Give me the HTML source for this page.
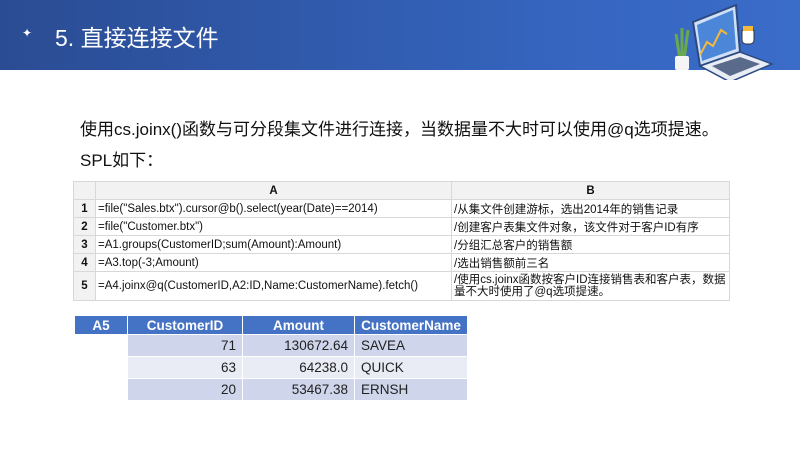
<!DOCTYPE html>
<html><head><meta charset="utf-8"><style>
body{margin:0;width:800px;height:450px;background:#fff;position:relative;overflow:hidden;font-family:"Liberation Sans","Noto Sans CJK SC",sans-serif}
.hd{position:absolute;left:0;top:0;width:800px;height:70px;background:linear-gradient(90deg,#2a4c93 0%,#3565bf 70%,#3a6cc9 100%)}
.ttl{position:absolute;left:55px;top:19px;color:#fff;font-size:23px;}
.star{position:absolute;left:22px;top:26px;color:#fff;font-size:12px}
.p{position:absolute;left:80px;font-size:17px;color:#111}
table{border-collapse:collapse;position:absolute}
.t1{left:73px;top:181px;font-size:11.5px;color:#111}
.t1 td{border:1px solid #d8d8d8;height:17px;padding:0 2px;white-space:nowrap}
.t1 .n{background:#f2f2f2;font-weight:bold;text-align:center;width:17px}
.t1 .h td{background:#f2f2f2;font-weight:bold;text-align:center}
.t2{left:74px;top:315px;font-size:13.5px;color:#222}
.t2 td{border:1px solid #fff;padding:0 6px;height:21px}
.t2 .h td{background:#4472c4;color:#fff;font-weight:bold;text-align:center;height:18px}
.r1 td.d,.r3 td.d{background:#cfd5ea}.r2 td.d{background:#e9ebf5}
</style></head><body>
<div class="hd"></div>
<div class="star">✦</div>
<div class="ttl">5. 直接连接文件</div>
<svg style="position:absolute;left:660px;top:0" width="140" height="80" viewBox="660 0 140 80">
<polygon points="693,22 736,5 740,52 700,66" fill="#cfe0f6" stroke="#2c4a80" stroke-width="2"/>
<polygon points="697,25 733,10 736,49 702,61" fill="#4b86d8"/>
<polyline points="700,55 707,42 713,46 721,30 727,34" fill="none" stroke="#f4b83a" stroke-width="2"/>
<polygon points="700,66 740,52 772,64 730,82" fill="#e8edf5" stroke="#2c4a80" stroke-width="1.5"/>
<polygon points="712,66 740,57 760,64 730,76" fill="#5a6a8a"/>
<rect x="742" y="28" width="12" height="16" rx="4" fill="#fff" stroke="#333"/>
<rect x="743" y="26" width="10" height="5" fill="#f4b83a"/>
<path d="M680 60 L676 34 M684 60 L688 30 M682 60 L682 28" stroke="#6aa84f" stroke-width="3"/>
<rect x="675" y="56" width="14" height="14" rx="2" fill="#f5f5f5"/>
</svg>
<div class="p" style="top:115px">使用cs.joinx()函数与可分段集文件进行连接，当数据量不大时可以使用@q选项提速。</div>
<div class="p" style="top:146px">SPL如下：</div>
<table class="t1">
<tr class="h"><td></td><td style="width:351px">A</td><td style="width:273px">B</td></tr>
<tr><td class="n">1</td><td>=file("Sales.btx").cursor@b().select(year(Date)==2014)</td><td>/从集文件创建游标，选出2014年的销售记录</td></tr>
<tr><td class="n">2</td><td>=file("Customer.btx")</td><td>/创建客户表集文件对象，该文件对于客户ID有序</td></tr>
<tr><td class="n">3</td><td>=A1.groups(CustomerID;sum(Amount):Amount)</td><td>/分组汇总客户的销售额</td></tr>
<tr><td class="n">4</td><td>=A3.top(-3;Amount)</td><td>/选出销售额前三名</td></tr>
<tr><td class="n" style="height:28px">5</td><td>=A4.joinx@q(CustomerID,A2:ID,Name:CustomerName).fetch()</td><td style="white-space:normal;line-height:12px">/使用cs.joinx函数按客户ID连接销售表和客户表，数据量不大时使用了@q选项提速。</td></tr>
</table>
<table class="t2">
<tr class="h"><td style="width:40px">A5</td><td style="width:102px">CustomerID</td><td style="width:99px">Amount</td><td style="width:100px">CustomerName</td></tr>
<tr class="r1"><td></td><td class="d" style="text-align:right">71</td><td class="d" style="text-align:right">130672.64</td><td class="d">SAVEA</td></tr>
<tr class="r2"><td></td><td class="d" style="text-align:right">63</td><td class="d" style="text-align:right">64238.0</td><td class="d">QUICK</td></tr>
<tr class="r3"><td></td><td class="d" style="text-align:right">20</td><td class="d" style="text-align:right">53467.38</td><td class="d">ERNSH</td></tr>
</table>
</body></html>
